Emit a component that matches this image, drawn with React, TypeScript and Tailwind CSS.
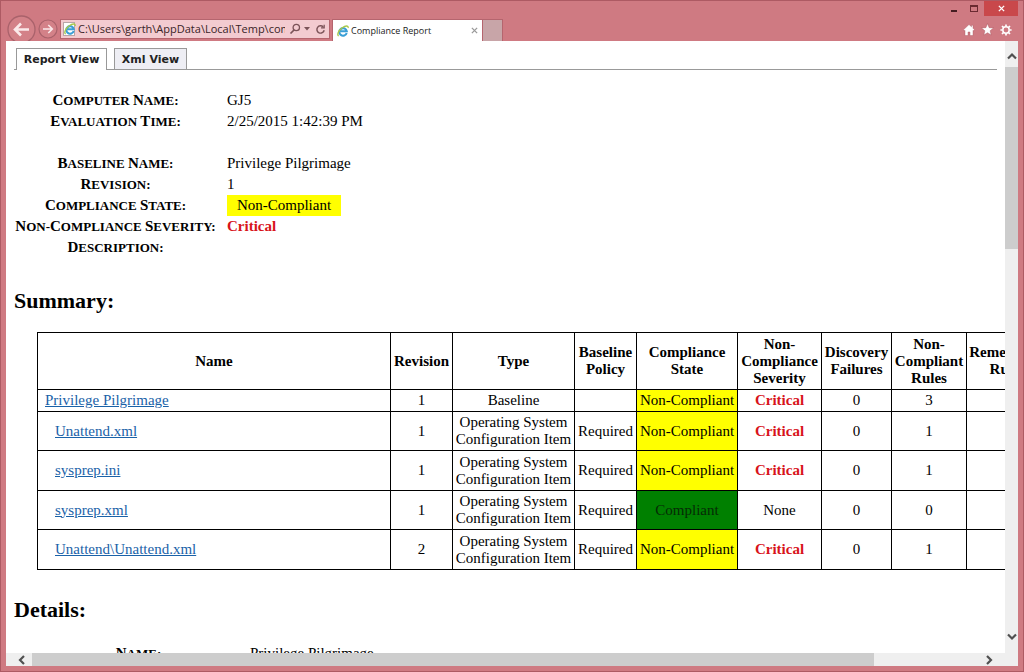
import React from 'react';

type Item = {
  name: string;
  revision: number;
  type: string;
  policy: string;
  state: string;
  severity: string;
  failures: number;
  rules: number;
};

const items: Item[] = [
  { name: 'Privilege Pilgrimage', revision: 1, type: 'Baseline', policy: '', state: 'Non-Compliant', severity: 'Critical', failures: 0, rules: 3 },
  { name: 'Unattend.xml', revision: 1, type: 'Operating System Configuration Item', policy: 'Required', state: 'Non-Compliant', severity: 'Critical', failures: 0, rules: 1 },
  { name: 'sysprep.ini', revision: 1, type: 'Operating System Configuration Item', policy: 'Required', state: 'Non-Compliant', severity: 'Critical', failures: 0, rules: 1 },
  { name: 'sysprep.xml', revision: 1, type: 'Operating System Configuration Item', policy: 'Required', state: 'Compliant', severity: 'None', failures: 0, rules: 0 },
  { name: 'Unattend\\Unattend.xml', revision: 2, type: 'Operating System Configuration Item', policy: 'Required', state: 'Non-Compliant', severity: 'Critical', failures: 0, rules: 1 },
];

const columns = [
  { label: 'Name', width: 'w-[353px]' },
  { label: 'Revision', width: 'w-[62px]' },
  { label: 'Type', width: 'w-[122px]' },
  { label: 'Baseline Policy', width: 'w-[62px]' },
  { label: 'Compliance State', width: 'w-[101px]' },
  { label: 'Non-Compliance Severity', width: 'w-[84px]' },
  { label: 'Discovery Failures', width: 'w-[70px]' },
  { label: 'Non-Compliant Rules', width: 'w-[75px]' },
  { label: 'Remediated Rules', width: 'w-[82px]' },
];

const IeLogo: React.FC = () => (
  <svg viewBox="0 0 16 16" className="size-3 shrink-0" fill="none">
    <path d="M12.9 10.6A5 5 0 1 1 13 8.4H4.6" stroke="#3a9fd6" strokeWidth="2.8" />
    <path d="M2.3 14.6C-.6 13.4 2 7 7 3.6 11 .8 15.5.3 14.8 4" stroke="#a9c94a" strokeWidth="1.8" />
  </svg>
);

const Chevron: React.FC<{ d: string }> = ({ d }) => (
  <svg viewBox="0 0 10 10" className="size-[10px]" fill="none" stroke="#505050" strokeWidth="2.2">
    <path d={d} />
  </svg>
);

const InfoRow: React.FC<{ label: string; children?: React.ReactNode }> = ({ label, children }) => (
  <tr className="h-[21px]">
    <th className="w-[203px] p-0 text-center text-[13px] leading-[21px] whitespace-pre uppercase">
      {label.split(/(?<=[ -])/).map(word => (
        <span key={word} className="inline-block first-letter:text-[15px]">{word}</span>
      ))}
    </th>
    <td className="p-0 pl-[10px] leading-[21px]">{children}</td>
  </tr>
);

const TitleBar: React.FC = () => (
  <header className="flex h-[40px] shrink-0 overflow-hidden pl-[6px] font-['Open_Sans','Noto_Sans',sans-serif]">
    <div className="flex h-[56px] items-center gap-[2px]">
      <button aria-label="Back" className="size-[29px]">
        <svg viewBox="0 0 29 29" fill="none">
          <circle cx="14.5" cy="14.5" r="13.5" fill="#d38188" stroke="#a9626b" strokeWidth="1.3" />
          <path d="M22 14.5H8.5M14 8.5l-6 6 6 6" stroke="#fbe9ea" strokeWidth="2.6" />
        </svg>
      </button>
      <button aria-label="Forward" className="size-[20px]">
        <svg viewBox="0 0 20 20" fill="none">
          <circle cx="10" cy="10" r="9" fill="#d38188" stroke="#a9626b" strokeWidth="1.2" />
          <path d="M5 10h9M10.3 6l4 4-4 4" stroke="#fbe9ea" strokeWidth="1.6" />
        </svg>
      </button>
    </div>
    <div className="mt-[18px] ml-[2px] flex h-5 w-[270px] items-center border border-[#b5656e] bg-[#f3cbd0] pl-[2px]">
      <span className="flex h-[14px] w-3 shrink-0 items-center border border-[#b9a5a7] bg-white">
        <IeLogo />
      </span>
      <input
        aria-label="Address"
        className="ml-[3px] min-w-0 flex-1 bg-transparent text-[11px] text-[#3a2427] outline-none"
        defaultValue="C:\Users\garth\AppData\Local\Temp\compliance.htm"
      />
      <button aria-label="Search" className="ml-1">
        <svg viewBox="0 0 12 12" className="size-3" fill="none" stroke="#7b5358" strokeWidth="1.3">
          <circle cx="7.3" cy="4.5" r="3.2" />
          <path d="M5 7L1.5 10.5" strokeWidth="1.7" />
        </svg>
      </button>
      <button aria-label="Show address list" className="ml-[3px]">
        <svg viewBox="0 0 6 4" className="h-1 w-[6px]">
          <path d="M0 0h6L3 3.5z" fill="#7b5358" />
        </svg>
      </button>
      <button aria-label="Refresh" className="mr-[3px] ml-[5px]">
        <svg viewBox="0 0 12 12" className="size-[11px]" fill="none" stroke="#7b5358" strokeWidth="1.6">
          <path d="M9 3.2A4 4 0 1 0 10 6.8" />
          <path d="M10 .8v3.4H6.6" strokeWidth="1.4" />
        </svg>
      </button>
    </div>
    <div className="mt-[18px] ml-[2px] flex h-[22px] w-[151px] items-center border border-b-0 border-[#b5656e] bg-white px-1">
      <IeLogo />
      <span className="ml-[2px] flex-1 text-[9px] whitespace-nowrap text-[#222]">Compliance Report</span>
      <button aria-label="Close tab">
        <svg viewBox="0 0 8 8" className="size-[7px]" stroke="#999" strokeWidth="1.5">
          <path d="M1 1l6 6M7 1L1 7" />
        </svg>
      </button>
    </div>
    <button aria-label="New tab" className="mt-[18px] h-[22px] w-5 border border-b-0 border-l-0 border-[#b5656e] bg-[#c8a5a8]" />
    <div className="ml-auto flex flex-col items-end pr-[5px]">
      <div className="flex h-[15px]">
        <button aria-label="Minimize" className="flex w-5 items-center justify-center">
          <span className="mt-1 h-[2px] w-[6px] bg-[#451c21]" />
        </button>
        <button aria-label="Maximize" className="flex w-5 items-center justify-center">
          <span className="h-[7px] w-2 border border-t-2 border-[#6a2a31]" />
        </button>
        <button aria-label="Close" className="flex w-[34px] items-center justify-center bg-[#c9484b]">
          <svg viewBox="0 0 8 8" className="size-[7px]" stroke="#fff" strokeWidth="1.6">
            <path d="M1 1l6 6M7 1L1 7" />
          </svg>
        </button>
      </div>
      <div className="mt-[7px] flex items-center gap-[6px] pr-[6px]">
        <button aria-label="Home">
          <svg viewBox="0 0 12 12" className="size-3" fill="#fff" stroke="#a85660" strokeWidth=".4">
            <path d="M6 .5L.5 5.8l.9 1 .6-.5v5.2h3V8h2v3.5h3V6.3l.6.5.9-1L10 4.200V1.3H8.5v1.5z" />
          </svg>
        </button>
        <button aria-label="Favorites">
          <svg viewBox="0 0 12 12" className="size-[13px]" fill="#fff" stroke="#a85660" strokeWidth=".4">
            <path d="M6 .6l1.5 3.7 4 .3-3.1 2.6 1 3.9L6 9l-3.4 2.1 1-3.9L.5 4.600l4-.3z" />
          </svg>
        </button>
        <button aria-label="Tools">
          <svg viewBox="0 0 12 12" className="size-3" fill="none" stroke="#fff">
            <circle cx="6" cy="6" r="3.2" strokeWidth="1.5" />
            <path d="M6 .4v2M6 9.6v2M.4 6h2M9.6 6h2M2 2l1.5 1.5M8.5 8.5L10 10M10 2L8.5 3.5M3.5 8.5L2 10" strokeWidth="1.7" />
          </svg>
        </button>
      </div>
    </div>
  </header>
);

const Tabs: React.FC = () => (
  <nav className="mx-2 flex h-[22px] font-['DejaVu_Sans',Verdana,sans-serif] text-[11px] font-bold text-[#222]">
    <span className="w-[2px] border-b border-[#999]" />
    <button className="w-[91px] border border-b-0 border-[#999] bg-white">Report View</button>
    <span className="w-[7px] border-b border-[#999]" />
    <button className="w-[73px] border border-[#999] bg-[#eeeef4]">Xml View</button>
    <span className="flex-1 border-b border-[#999]" />
  </nav>
);

const SummaryTable: React.FC = () => (
  <table className="ml-[31px] w-[1012px] table-fixed border-collapse text-center">
    <thead>
      <tr className="h-[57px]">
        {columns.map(col => (
          <th key={col.label} className={`border border-black p-0 ${col.width}`}>{col.label}</th>
        ))}
      </tr>
    </thead>
    <tbody>
      {items.map((item, i) => (
        <tr key={item.name} className={i === 0 ? 'h-[22px]' : 'odd:h-[40px] even:h-[39px]'}>
          <td className={`border border-black p-0 text-left ${i === 0 ? 'pl-[7px]' : 'pl-[17px]'}`}>
            <a href="#details" className="text-[#1a62a8] underline">{item.name}</a>
          </td>
          <td className="border border-black p-0">{item.revision}</td>
          <td className="border border-black p-0">{item.type}</td>
          <td className="border border-black p-0">{item.policy}</td>
          <td className={`border border-black p-0 ${item.state === 'Compliant' ? 'bg-[#008000] text-[#062b06]' : 'bg-[#ffff00]'}`}>{item.state}</td>
          <td className={`border border-black p-0 ${item.severity === 'Critical' ? 'font-bold text-[#d8141a]' : ''}`}>{item.severity}</td>
          <td className="border border-black p-0">{item.failures}</td>
          <td className="border border-black p-0">{item.rules}</td>
          <td className="border border-black p-0"></td>
        </tr>
      ))}
    </tbody>
  </table>
);

const Report: React.FC = () => (
  <main className="min-w-0 flex-1 overflow-hidden bg-white pt-[7px] font-['Liberation_Serif','Times_New_Roman',serif] text-[15px] leading-[17px] text-black">
    <Tabs />
    <table className="mt-[20px] ml-2 border-collapse">
      <tbody>
        <InfoRow label="Computer Name:">GJ5</InfoRow>
        <InfoRow label="Evaluation Time:">2/25/2015 1:42:39 PM</InfoRow>
        <tr className="h-[21px]"><td colSpan={2}></td></tr>
        <InfoRow label="Baseline Name:">Privilege Pilgrimage</InfoRow>
        <InfoRow label="Revision:">1</InfoRow>
        <InfoRow label="Compliance State:">
          <span className="block w-[114px] bg-[#ffff00] text-center">Non-Compliant</span>
        </InfoRow>
        <InfoRow label="Non-Compliance Severity:">
          <span className="font-bold text-[#d8141a]">Critical</span>
        </InfoRow>
        <InfoRow label="Description:" />
      </tbody>
    </table>
    <h2 className="mt-[30px] mb-[18px] ml-2 text-[22px] leading-[26px] font-bold">Summary:</h2>
    <SummaryTable />
    <h2 id="details" className="mt-[27px] mb-[20px] ml-2 text-[22px] leading-[26px] font-bold">Details:</h2>
    <table className="ml-[31px] border-collapse">
      <tbody>
        <InfoRow label="Name:">Privilege Pilgrimage</InfoRow>
      </tbody>
    </table>
  </main>
);

const App: React.FC = () => {
  return (
    <div className="flex h-screen flex-col overflow-hidden border border-[#ad5a63] bg-[#cf7a82]">
      <TitleBar />
      <div className="mx-[5px] mb-[5px] flex min-h-0 flex-1 flex-col bg-[#efefef]">
        <div className="flex min-h-0 flex-1">
          <Report />
          <div className="flex w-[13px] shrink-0 flex-col">
            <button aria-label="Scroll up" className="flex h-[26px] items-center justify-center pt-1">
              <Chevron d="M1 7.5l4-4 4 4" />
            </button>
            <div className="flex-[182] bg-[#cdcdcd]" />
            <div className="flex-[378]" />
            <button aria-label="Scroll down" className="flex h-[26px] items-center justify-center pb-[6px]">
              <Chevron d="M1 2.5l4 4 4-4" />
            </button>
          </div>
        </div>
        <div className="flex h-[13px] shrink-0 pr-[13px]">
          <button aria-label="Scroll left" className="flex w-[26px] items-center justify-center pl-[6px]">
            <Chevron d="M7 1L3 5l4 4" />
          </button>
          <div className="flex-[842] bg-[#cdcdcd]" />
          <div className="flex-[105]" />
          <button aria-label="Scroll right" className="flex w-[26px] items-center justify-center pr-[6px]">
            <Chevron d="M3 1l4 4-4 4" />
          </button>
        </div>
      </div>
    </div>
  );
};

export default App;
